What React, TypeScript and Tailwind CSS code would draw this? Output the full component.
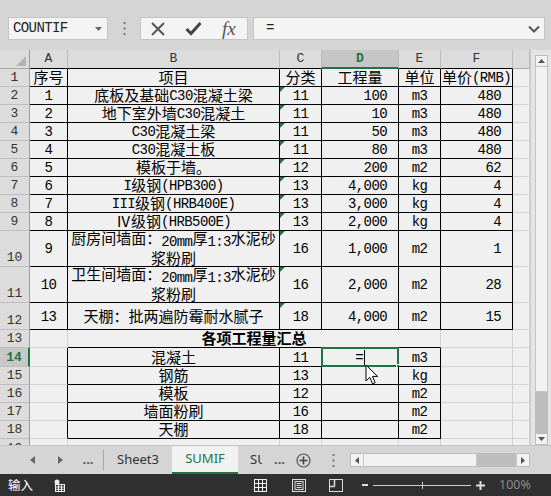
import React from 'react';

const CJK_SPLIT = /([\u2E80-\u9FFF\u3000-\u303F\uFF00-\uFFEF\u2160-\u217F]+)/;
const isCJK = (s: string) => /[\u2E80-\u9FFF\u3000-\u303F\uFF00-\uFFEF\u2160-\u217F]/.test(s);

function T({ s }: { s: string }) {
  const parts = s.split(CJK_SPLIT).filter((p) => p !== '');
  return (
    <>
      {parts.map((p, i) =>
        isCJK(p) ? (
          <span key={i} className="relative top-[-1px] font-['Noto_Sans_CJK_SC'] text-[15px]">
            {p}
          </span>
        ) : (
          <span key={i} className="relative top-[1px] font-['Liberation_Mono'] text-[14px] tracking-[-0.6px]">
            {p}
          </span>
        )
      )}
    </>
  );
}

const BLACK = 'relative flex items-center overflow-hidden whitespace-nowrap border-r border-b border-black bg-[#f0f0f0] leading-[17px] text-black';
const LIGHT = 'relative flex items-center overflow-hidden whitespace-nowrap border-r border-b border-[#d4d4d4] bg-[#f0f0f0] leading-[17px] text-black';
const A_LEFT = 'relative flex items-center overflow-hidden whitespace-nowrap border-r border-b border-r-black border-b-[#d4d4d4] bg-[#f0f0f0] leading-[17px] text-black';
const MERGE13 = 'relative flex items-center justify-center overflow-hidden whitespace-nowrap border-r border-b border-r-[#d4d4d4] border-b-black bg-[#f0f0f0] leading-[17px] text-black font-bold col-span-4';

const RH = "flex justify-center items-end pb-[1px] overflow-hidden border-r border-b border-r-[#9c9c9c] border-b-[#bdbdbd] bg-[#dcdcdc] font-['Liberation_Mono'] text-[13px] leading-[15px] text-[#333]";
const RH_ACTIVE = "flex justify-center items-end pb-[1px] overflow-hidden border-r-2 border-b border-r-[#217346] border-b-[#bdbdbd] bg-[#c8c8c8] font-['Liberation_Mono'] text-[13px] leading-[15px] text-[#217346] font-bold";
const RH_TOP = "flex justify-center items-start pt-[2px] overflow-hidden border-r border-r-[#9c9c9c] bg-[#dcdcdc] font-['Liberation_Mono'] text-[13px] leading-[15px] text-[#333]";

const CH = "flex justify-center items-center border-r border-b border-r-[#bababa] border-b-black bg-[#dcdcdc] font-['Liberation_Mono'] text-[13px] text-[#333]";
const CH_ACTIVE = "flex justify-center items-center border-r border-b-2 border-r-[#bababa] border-b-[#217346] bg-[#c6c6c6] font-['Liberation_Mono'] text-[13px] font-bold text-[#217346]";
const CH_LIGHT = "flex justify-center items-center border-r border-b border-r-[#bababa] border-b-[#a8a8a8] bg-[#dcdcdc] font-['Liberation_Mono'] text-[13px] text-[#333]";

type DataRow = { n: number; a: string; b: string | string[]; c: string; d: string; e: string; f: string };

const rows: DataRow[] = [
  { n: 2, a: '1', b: '底板及基础C30混凝土梁', c: '11', d: '100', e: 'm3', f: '480' },
  { n: 3, a: '2', b: '地下室外墙C30混凝土', c: '11', d: '10', e: 'm3', f: '480' },
  { n: 4, a: '3', b: 'C30混凝土梁', c: '11', d: '50', e: 'm3', f: '480' },
  { n: 5, a: '4', b: 'C30混凝土板', c: '11', d: '80', e: 'm3', f: '480' },
  { n: 6, a: '5', b: '模板于墙。', c: '12', d: '200', e: 'm2', f: '62' },
  { n: 7, a: '6', b: 'I级钢(HPB300)', c: '13', d: '4,000', e: 'kg', f: '4' },
  { n: 8, a: '7', b: 'III级钢(HRB400E)', c: '13', d: '3,000', e: 'kg', f: '4' },
  { n: 9, a: '8', b: 'Ⅳ级钢(HRB500E)', c: '13', d: '2,000', e: 'kg', f: '4' },
  { n: 10, a: '9', b: ['厨房间墙面：20mm厚1:3水泥砂', '浆粉刷'], c: '16', d: '1,000', e: 'm2', f: '1' },
  { n: 11, a: '10', b: ['卫生间墙面：20mm厚1:3水泥砂', '浆粉刷'], c: '16', d: '2,000', e: 'm2', f: '28' },
  { n: 12, a: '13', b: '天棚：批两遍防霉耐水腻子', c: '18', d: '4,000', e: 'm2', f: '15' },
];

const summary = [
  { n: 14, b: '混凝土', c: '11', e: 'm3' },
  { n: 15, b: '钢筋', c: '13', e: 'kg' },
  { n: 16, b: '模板', c: '12', e: 'm2' },
  { n: 17, b: '墙面粉刷', c: '16', e: 'm2' },
  { n: 18, b: '天棚', c: '18', e: 'm2' },
];

function Tri() {
  return <span className="absolute left-0 top-0 w-0 h-0 border-t-[5px] border-t-[#217346] border-r-[5px] border-r-transparent" />;
}

function Grid() {
  const cells: React.ReactNode[] = [];
  cells.push(
    <div key="corner" className="relative border-r border-b border-r-[#9c9c9c] border-b-[#a8a8a8] bg-[#dcdcdc]">
      <svg className="absolute right-[3px] bottom-[2px]" width="10" height="10" viewBox="0 0 10 10">
        <polygon points="10,0 10,10 0,10" fill="#b3b3b3" />
      </svg>
    </div>
  );
  ['A', 'B', 'C'].forEach((l) => cells.push(<div key={'h' + l} className={CH}>{l}</div>));
  cells.push(<div key="hD" className={CH_ACTIVE}>D</div>);
  ['E', 'F'].forEach((l) => cells.push(<div key={'h' + l} className={CH}>{l}</div>));
  cells.push(<div key="hG" className={CH_LIGHT}></div>);

  cells.push(<div key="r1" className={RH}>1</div>);
  ['序号', '项目', '分类', '工程量', '单位', '单价(RMB)'].forEach((t, i) =>
    cells.push(
      <div key={'1-' + i} className={BLACK + ' justify-center'}>
        <T s={t} />
      </div>
    )
  );
  cells.push(<div key="1-g" className={LIGHT}></div>);

  rows.forEach((r) => {
    cells.push(<div key={'r' + r.n} className={RH}>{r.n}</div>);
    cells.push(
      <div key={r.n + 'a'} className={BLACK + ' justify-center'}>
        <T s={r.a} />
      </div>
    );
    cells.push(
      <div key={r.n + 'b'} className={BLACK + ' justify-center'}>
        {Array.isArray(r.b) ? (
          <div className="flex flex-col items-center">
            {r.b.map((l, i) => (
              <div key={i} className="whitespace-nowrap">
                <T s={l} />
              </div>
            ))}
          </div>
        ) : (
          <T s={r.b} />
        )}
      </div>
    );
    cells.push(
      <div key={r.n + 'c'} className={BLACK + ' justify-center'}>
        <Tri />
        <T s={r.c} />
      </div>
    );
    cells.push(
      <div key={r.n + 'd'} className={BLACK + ' justify-end pr-[11px]'}>
        <T s={r.d} />
      </div>
    );
    cells.push(
      <div key={r.n + 'e'} className={BLACK + ' justify-center'}>
        <T s={r.e} />
      </div>
    );
    cells.push(
      <div key={r.n + 'f'} className={BLACK + ' justify-end pr-[11px]'}>
        <T s={r.f} />
      </div>
    );
    cells.push(<div key={r.n + 'g'} className={LIGHT}></div>);
  });

  cells.push(<div key="r13" className={RH}>13</div>);
  cells.push(<div key="13a" className={LIGHT}></div>);
  cells.push(
    <div key="13m" className={MERGE13}>
      <span className="relative top-[-1px] font-['Noto_Sans_CJK_SC'] text-[15px] font-bold">各项工程量汇总</span>
    </div>
  );
  cells.push(<div key="13f" className={LIGHT}></div>);
  cells.push(<div key="13g" className={LIGHT}></div>);

  summary.forEach((s) => {
    cells.push(
      <div key={'r' + s.n} className={s.n === 14 ? RH_ACTIVE : RH}>
        {s.n}
      </div>
    );
    cells.push(<div key={s.n + 'a'} className={A_LEFT}></div>);
    cells.push(
      <div key={s.n + 'b'} className={BLACK + ' justify-center'}>
        <T s={s.b} />
      </div>
    );
    cells.push(
      <div key={s.n + 'c'} className={BLACK + ' justify-center'}>
        <T s={s.c} />
      </div>
    );
    if (s.n === 14) {
      cells.push(
        <div key="14d" className={BLACK + ' justify-end pr-[33px] overflow-visible'}>
          <T s="=" />
          <span className="ml-[1px] w-px h-[15px] bg-black" />
          <span className="absolute left-[-1px] top-[-1px] right-[-1px] bottom-[-1px] border-2 border-[#217346]" />
          <span className="absolute right-[-3px] bottom-[-3px] w-[5px] h-[5px] bg-[#217346] border border-[#f0f0f0]" />
        </div>
      );
    } else {
      cells.push(<div key={s.n + 'd'} className={BLACK}></div>);
    }
    cells.push(
      <div key={s.n + 'e'} className={BLACK + ' justify-center'}>
        <T s={s.e} />
      </div>
    );
    cells.push(<div key={s.n + 'f'} className={LIGHT}></div>);
    cells.push(<div key={s.n + 'g'} className={LIGHT}></div>);
  });

  cells.push(<div key="r19" className={RH_TOP}>19</div>);
  for (let i = 0; i < 7; i++) {
    cells.push(<div key={'19-' + i} className="border-r border-[#d4d4d4] bg-[#f0f0f0]"></div>);
  }

  return (
    <div className="grid w-[530px] h-[395px] grid-cols-[30px_38px_212px_42px_77px_42px_72px_17px] grid-rows-[19px_18px_18px_18px_18px_18px_18px_18px_18px_18px_36px_36px_27px_18px_19px_18px_18px_18px_18px_6px] overflow-hidden">
      {cells}
    </div>
  );
}

function VScroll() {
  return (
    <div className="w-[21px] h-[395px] flex flex-col pl-[4px] pr-[3px] pt-[5px] bg-[#e4e4e4] border-l border-[#c8c8c8]">
      <div className="h-[12px] bg-[#f2f2f2] border border-[#bcbcbc] flex items-center justify-center">
        <svg width="7" height="4" viewBox="0 0 7 4">
          <polygon points="0,4 7,4 3.5,0" fill="#555" />
        </svg>
      </div>
      <div className="h-[325px] bg-[#f2f2f2] border-x border-b border-[#c4c4c4]" />
      <div className="flex-1 bg-[#bdbdbd]" />
      <div className="h-[12px] bg-[#f2f2f2] border border-[#bcbcbc] flex items-center justify-center">
        <svg width="7" height="4" viewBox="0 0 7 4">
          <polygon points="0,0 7,0 3.5,4" fill="#555" />
        </svg>
      </div>
    </div>
  );
}

function Dots() {
  return (
    <svg width="3" height="13" viewBox="0 0 3 13">
      <rect x="0.5" y="0" width="2" height="2" fill="#777" />
      <rect x="0.5" y="5.5" width="2" height="2" fill="#777" />
      <rect x="0.5" y="11" width="2" height="2" fill="#777" />
    </svg>
  );
}

function FormulaBar() {
  return (
    <div className="h-[23px] flex items-stretch">
      <div className="ml-[8px] w-[100px] bg-[#f4f4f4] border border-[#c4c4c4] flex items-center justify-between pl-[4px] pr-[5px]">
        <span className="font-['Liberation_Mono'] text-[14px] tracking-[-0.6px] text-[#222]">COUNTIF</span>
        <svg width="7" height="4" viewBox="0 0 7 4">
          <polygon points="0,0 7,0 3.5,4" fill="#666" />
        </svg>
      </div>
      <div className="w-[32px] flex items-center justify-center">
        <Dots />
      </div>
      <div className="w-[108px] bg-[#f4f4f4] border border-[#c4c4c4] flex items-center pl-[9px]">
        <svg width="16" height="16" viewBox="0 0 16 16">
          <path d="M2 2 L14 14 M14 2 L2 14" stroke="#555" strokeWidth="2" />
        </svg>
        <svg className="ml-[19px]" width="17" height="15" viewBox="0 0 17 15">
          <path d="M1.5 8 L6 12.5 L15.5 2" stroke="#444" strokeWidth="3" fill="none" />
        </svg>
        <span className="ml-[20px] font-['Liberation_Serif'] italic text-[19px] leading-none text-[#555]">fx</span>
      </div>
      <div className="ml-[5px] w-[292px] bg-[#f4f4f4] border border-[#c4c4c4] flex items-center justify-between pl-[12px] pr-[4px]">
        <span className="font-['Liberation_Mono'] text-[14px] text-[#222]">=</span>
        <svg width="12" height="8" viewBox="0 0 12 8">
          <path d="M1 1.5 L6 6.5 L11 1.5" stroke="#555" strokeWidth="2" fill="none" />
        </svg>
      </div>
    </div>
  );
}

function TabBar() {
  return (
    <div className="h-[29px] flex items-stretch bg-[#d5d5d5] font-['Noto_Sans'] text-[13px] text-[#333] border-t border-[#c4c4c4]">
      <div className="ml-[23px] w-[18px] flex items-center justify-center">
        <svg width="5" height="8" viewBox="0 0 5 8">
          <polygon points="5,0 5,8 0,4" fill="#666" />
        </svg>
      </div>
      <div className="ml-[10px] w-[18px] flex items-center justify-center">
        <svg width="5" height="8" viewBox="0 0 5 8">
          <polygon points="0,0 0,8 5,4" fill="#666" />
        </svg>
      </div>
      <div className="ml-[10px] w-[18px] flex items-center justify-center text-[#555] font-bold">...</div>
      <div className="ml-[6px] w-px my-[4px] bg-[#a8a8a8]" />
      <div className="w-[68px] flex items-center justify-center">Sheet3</div>
      <div className="w-[66px] flex items-center justify-center bg-[#f2f2f2] text-[#217346] border-b-2 border-[#217346]">SUMIF</div>
      <div className="w-[52px] flex items-center pl-[12px]">
        <span className="w-[12px] overflow-hidden whitespace-nowrap">SUM</span>
        <span className="ml-[12px] text-[#555] font-bold">...</span>
      </div>
      <div className="w-[26px] flex items-center justify-center">
        <svg width="15" height="15" viewBox="0 0 15 15">
          <circle cx="7.5" cy="7.5" r="6.5" stroke="#555" strokeWidth="1.2" fill="none" />
          <path d="M7.5 3.5 V11.5 M3.5 7.5 H11.5" stroke="#444" strokeWidth="1.6" />
        </svg>
      </div>
      <div className="w-[34px] flex items-center justify-center">
        <Dots />
      </div>
      <div className="w-[180px] my-[7px] flex border border-[#bcbcbc] bg-[#bdbdbd]">
        <div className="w-[12px] bg-[#f2f2f2] flex items-center justify-center">
          <svg width="4" height="7" viewBox="0 0 4 7">
            <polygon points="4,0 4,7 0,3.5" fill="#555" />
          </svg>
        </div>
        <div className="w-[114px] bg-[#f2f2f2] border-l border-r border-[#c8c8c8]" />
        <div className="flex-1" />
        <div className="w-[13px] bg-[#f2f2f2] border-l border-[#c8c8c8] flex items-center justify-center">
          <svg width="4" height="7" viewBox="0 0 4 7">
            <polygon points="0,0 0,7 4,3.5" fill="#555" />
          </svg>
        </div>
      </div>
    </div>
  );
}

function StatusBar() {
  return (
    <div className="h-[22px] bg-[#303030] flex items-center text-white">
      <span className="ml-[8px] font-['Noto_Sans_CJK_SC'] text-[12.5px] leading-none">输入</span>
      <svg className="ml-[21px]" width="11" height="13" viewBox="0 0 11 13">
        <circle cx="3" cy="3" r="2.5" fill="#eee" />
        <rect x="1.5" y="5.5" width="9" height="7" fill="none" stroke="#eee" />
        <path d="M1.5 8 H10.5 M1.5 10.3 H10.5 M4.5 5.5 V12.5 M7.5 5.5 V12.5" stroke="#eee" />
      </svg>
      <svg className="ml-[189px]" width="13" height="13" viewBox="0 0 13 13">
        <rect x="0.5" y="0.5" width="12" height="12" fill="none" stroke="#eee" />
        <path d="M4.5 0.5 V12.5 M8.5 0.5 V12.5 M0.5 4.5 H12.5 M0.5 8.5 H12.5" stroke="#eee" />
      </svg>
      <svg className="ml-[25px]" width="14" height="13" viewBox="0 0 14 13">
        <rect x="0.5" y="0.5" width="13" height="12" fill="none" stroke="#ddd" />
        <rect x="3" y="2.5" width="8" height="8" fill="none" stroke="#ddd" />
        <path d="M4.5 4.5 H9.5 M4.5 6.5 H9.5 M4.5 8.5 H9.5" stroke="#ddd" />
      </svg>
      <svg className="ml-[23px]" width="14" height="13" viewBox="0 0 14 13">
        <rect x="0.5" y="0.5" width="13" height="12" fill="none" stroke="#ddd" />
        <path d="M5.5 0.5 V7.5 M0.5 7.5 H5.5" stroke="#ddd" strokeWidth="1.5" />
      </svg>
      <span className="ml-[19px] w-[6px] h-[2px] bg-[#ddd]" />
      <div className="ml-[5px] w-[98px] h-[1px] bg-[#cfcfcf] relative">
        <span className="absolute left-[49px] top-[-3px] w-px h-[7px] bg-[#cfcfcf]" />
      </div>
      <svg className="ml-[5px]" width="9" height="9" viewBox="0 0 9 9">
        <path d="M4.5 0 V9 M0 4.5 H9" stroke="#ddd" strokeWidth="2" />
      </svg>
      <span className="ml-[14px] font-['Noto_Sans'] text-[12.5px] leading-none text-[#8c8c8c]">100%</span>
    </div>
  );
}

export default function App() {
  return (
    <div className="w-[551px] h-[496px] overflow-hidden bg-[#d5d5d5] flex flex-col relative select-none">
      <div className="h-[17px] shrink-0" />
      <FormulaBar />
      <div className="h-[10px] shrink-0" />
      <div className="flex h-[395px] shrink-0">
        <Grid />
        <VScroll />
      </div>
      <TabBar />
      <StatusBar />
      <svg className="absolute left-[365px] top-[364px]" width="14" height="22" viewBox="0 0 14 22">
        <path d="M1 1 L1 17 L4.8 13.3 L7.6 19.8 L10.2 18.7 L7.5 12.4 L12.6 12.4 Z" fill="#fff" stroke="#000" strokeWidth="1" strokeLinejoin="miter" />
      </svg>
    </div>
  );
}
